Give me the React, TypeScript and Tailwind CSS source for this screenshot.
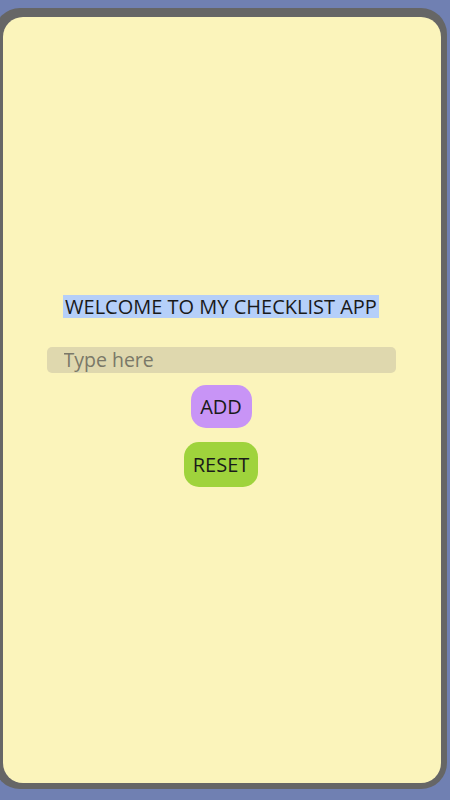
export default function App() {
  return (
    <main className="h-[800px] w-[450px] overflow-hidden bg-[#7080b2] pt-[8px] font-['Open_Sans',sans-serif]">
      {/* gray phone frame, left edge runs off screen */}
      <div className="ml-[-6px] h-[781px] w-[453px] rounded-[26px] bg-[#666666] pb-[6px] pl-[9px] pr-[6px] pt-[9px]">
        <div className="flex h-full w-full flex-col items-center rounded-[20px] bg-[#fbf4bb] pr-[2px] pt-[278px]">
          <h1 className="h-[23px] bg-[#b5cff9] px-[2px] text-[20px] leading-[23px] font-normal text-[#1a1a1a]">
            WELCOME TO MY CHECKLIST APP
          </h1>
          <input
            type="text"
            placeholder="Type here"
            className="mt-[29px] h-[26px] w-[349px] rounded-[5px] bg-[#dfd8ae] pl-[17px] text-[19.5px] text-[#333] outline-none placeholder:text-[#7a7868]"
          />
          <button className="mt-[12px] h-[43px] w-[61px] rounded-[15px] bg-[#c894f6] text-[20px] text-[#1a1a1a]">
            ADD
          </button>
          <button className="mt-[14px] h-[45px] w-[74px] rounded-[15px] bg-[#9fd33c] text-[20px] text-[#1a1a1a]">
            RESET
          </button>
        </div>
      </div>
    </main>
  );
}
